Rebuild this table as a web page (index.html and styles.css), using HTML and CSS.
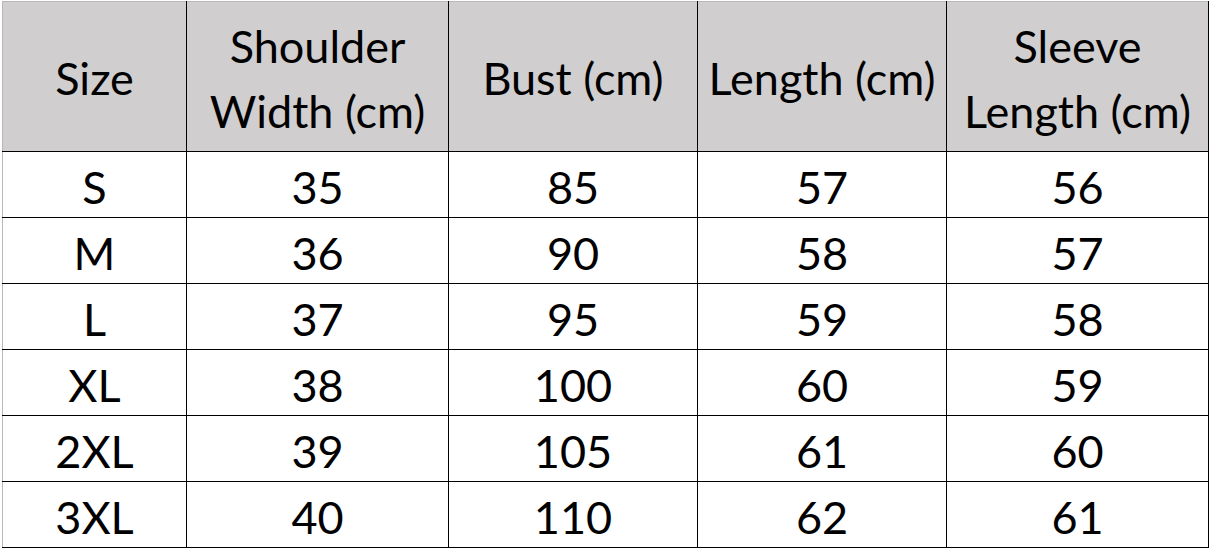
FILE: index.html
```html
<!DOCTYPE html>
<html>
<head>
<meta charset="utf-8">
<link rel="stylesheet" href="styles.css">
</head>
<body>
<table class="size-table">
  <colgroup>
    <col class="c1"><col class="c2"><col class="c3"><col class="c4"><col class="c5">
  </colgroup>
  <thead>
    <tr class="head">
      <th>Size</th>
      <th>Shoulder<br>Width (cm)</th>
      <th>Bust (cm)</th>
      <th>Length (cm)</th>
      <th>Sleeve<br>Length (cm)</th>
    </tr>
  </thead>
  <tbody>
    <tr><td>S</td><td>35</td><td>85</td><td>57</td><td>56</td></tr>
    <tr><td>M</td><td>36</td><td>90</td><td>58</td><td>57</td></tr>
    <tr><td>L</td><td>37</td><td>95</td><td>59</td><td>58</td></tr>
    <tr><td>XL</td><td>38</td><td>100</td><td>60</td><td>59</td></tr>
    <tr><td>2XL</td><td>39</td><td>105</td><td>61</td><td>60</td></tr>
    <tr><td>3XL</td><td>40</td><td>110</td><td>62</td><td>61</td></tr>
  </tbody>
</table>
</body>
</html>
```
FILE: styles.css
```css
html, body {
  margin: 0;
  padding: 0;
  background: #ffffff;
}
body {
  padding: 1px 0 0 2px;
  font-family: "Lato", "Liberation Sans", sans-serif;
  color: #000;
}
.size-table {
  border-collapse: collapse;
  table-layout: fixed;
  width: 1207px;
  border-left: 1px solid #b8b8b8;
  border-top: 1px solid #b8b8b8;
}
.c1 { width: 184px; }
.c2 { width: 262px; }
.c3 { width: 249px; }
.c4 { width: 249px; }
.c5 { width: 262px; }
.size-table th,
.size-table td {
  padding: 0;
  text-align: center;
  font-weight: normal;
  font-size: 45px;
  border-right: 1px solid #000;
  border-bottom: 1px solid #000;
  white-space: nowrap;
}
.size-table th:first-child,
.size-table td:first-child {
  border-left: 1px solid #b8b8b8;
}
.head th {
  background: #d0cece;
  height: 150px;
  line-height: 65px;
  padding-top: 4px;
  box-sizing: border-box;
}
.size-table td {
  line-height: 60px;
  padding-top: 5px;
}
```
